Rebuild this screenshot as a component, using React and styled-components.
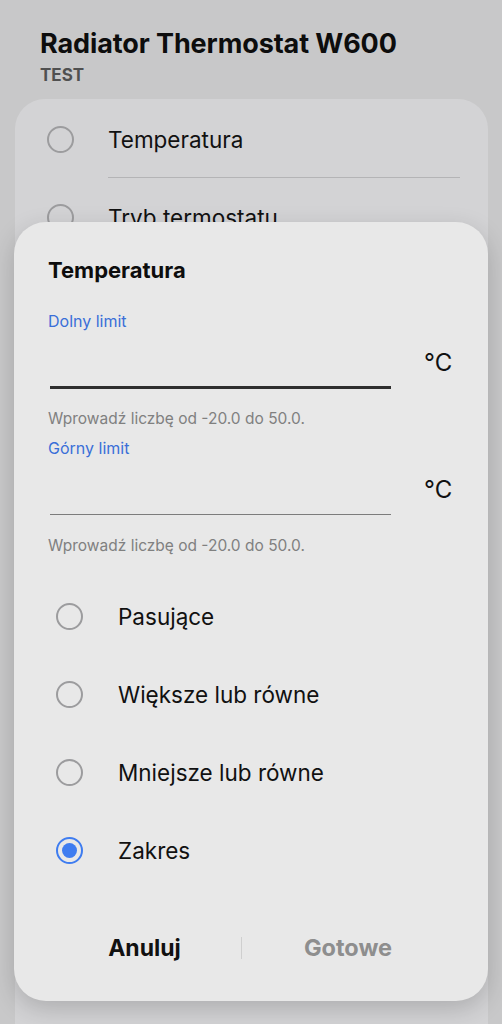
import styled, { createGlobalStyle } from "styled-components";

const GlobalStyle = createGlobalStyle`
  html, body {
    margin: 0;
    padding: 0;
    background: #c8c8c9;
  }
  body {
    font-family: "Inter", "Roboto", sans-serif;
    -webkit-font-smoothing: antialiased;
  }
`;

const Screen = styled.div`
  position: relative;
  width: 502px;
  height: 1024px;
  overflow: hidden;
  background: #c8c8c9;
`;

const Header = styled.div`
  padding: 27px 40px 0;

  .name {
    font-size: 27px;
    font-weight: 700;
    color: #0d0d0d;
    letter-spacing: -0.1px;
  }
  .sub {
    margin-top: 5px;
    font-size: 17px;
    font-weight: 700;
    color: #505050;
  }
`;

const BackCard = styled.div`
  margin: 14px 14px 0 15px;
  height: 960px;
  border-radius: 30px;
  background: #d3d3d5;
  padding: 3px 0 0;
`;

const BackRow = styled.div`
  display: flex;
  align-items: center;
  height: ${(p) => p.$h}px;
  padding-left: 32px;
  gap: 34px;
  font-size: 22.5px;
  color: #111;

  .label {
    flex: 1;
    height: 100%;
    display: flex;
    align-items: center;
    margin-right: 28px;
    border-bottom: ${(p) => (p.$divider ? "1px solid #b4b4b6" : "none")};
  }
`;

const Radio = styled.span`
  box-sizing: border-box;
  width: 27px;
  height: 27px;
  border-radius: 50%;
  flex: none;
  border: 2px solid ${(p) => (p.$checked ? "#3e7cf0" : "#9c9c9e")};
  display: flex;
  align-items: center;
  justify-content: center;

  &::after {
    content: "";
    width: 15px;
    height: 15px;
    border-radius: 50%;
    background: #3e7cf0;
    display: ${(p) => (p.$checked ? "block" : "none")};
  }
`;

const Dialog = styled.div`
  position: absolute;
  left: 14px;
  top: 222px;
  width: 474px;
  height: 779px;
  box-sizing: border-box;
  border-radius: 32px;
  background: #e8e8e8;
  box-shadow: 0 8px 24px rgba(0, 0, 0, 0.18);
  padding: 35px 34px 0 34px;
  display: flex;
  flex-direction: column;
`;

const Title = styled.div`
  font-size: 22px;
  font-weight: 700;
  color: #0d0d0d;
`;

const FieldLabel = styled.div`
  margin-top: ${(p) => p.$top}px;
  font-size: 16px;
  color: #3a6fd8;
`;

const FieldRow = styled.div`
  display: flex;
  align-items: flex-end;
  height: 58px;

  .line {
    width: 341px;
    margin-left: 2px;
    height: 0;
    border-bottom: ${(p) => (p.$active ? "3px solid #2e2e2e" : "1px solid #7c7c7c")};
    margin-bottom: ${(p) => (p.$active ? "0" : "1px")};
  }
  .unit {
    margin-left: 33px;
    align-self: flex-start;
    margin-top: 17px;
    font-size: 24px;
    color: #111;
  }
`;

const Hint = styled.div`
  margin-top: 20px;
  font-size: 15.5px;
  color: #808080;
`;

const Options = styled.div`
  margin-top: 22px;
  display: flex;
  flex-direction: column;
`;

const Option = styled.div`
  display: flex;
  align-items: center;
  height: 78px;
  padding-left: 8px;
  gap: 35px;
  font-size: 22.5px;
  color: #111;
`;

const Buttons = styled.div`
  margin-top: auto;
  margin-bottom: 39px;
  display: grid;
  grid-template-columns: 193px 1px 1fr;
  align-items: center;
`;

const Btn = styled.div`
  text-align: center;
  font-size: ${(p) => (p.$muted ? "23.5px" : "23px")};
  font-weight: 700;
  color: ${(p) => (p.$muted ? "#8e8e8e" : "#111")};
`;

const Sep = styled.div`
  width: 1px;
  height: 22px;
  background: #cfcfcf;
`;

const options = [
  { label: "Pasujące" },
  { label: "Większe lub równe" },
  { label: "Mniejsze lub równe" },
  { label: "Zakres", checked: true },
];

export default function App() {
  return (
    <Screen>
      <GlobalStyle />
      <Header>
        <div className="name">Radiator Thermostat W600</div>
        <div className="sub">TEST</div>
      </Header>
      <BackCard>
        <BackRow $divider $h={75}>
          <Radio />
          <div className="label">Temperatura</div>
        </BackRow>
        <BackRow $h={80}>
          <Radio />
          <div className="label">Tryb termostatu</div>
        </BackRow>
      </BackCard>

      <Dialog>
        <Title>Temperatura</Title>
        <FieldLabel $top={28}>Dolny limit</FieldLabel>
        <FieldRow $active>
          <div className="line" />
          <div className="unit">°C</div>
        </FieldRow>
        <Hint>Wprowadź liczbę od -20.0 do 50.0.</Hint>
        <FieldLabel $top={10}>Górny limit</FieldLabel>
        <FieldRow>
          <div className="line" />
          <div className="unit">°C</div>
        </FieldRow>
        <Hint>Wprowadź liczbę od -20.0 do 50.0.</Hint>
        <Options>
          {options.map((o) => (
            <Option key={o.label}>
              <Radio $checked={o.checked} />
              <span>{o.label}</span>
            </Option>
          ))}
        </Options>
        <Buttons>
          <Btn>Anuluj</Btn>
          <Sep />
          <Btn $muted>Gotowe</Btn>
        </Buttons>
      </Dialog>
    </Screen>
  );
}
